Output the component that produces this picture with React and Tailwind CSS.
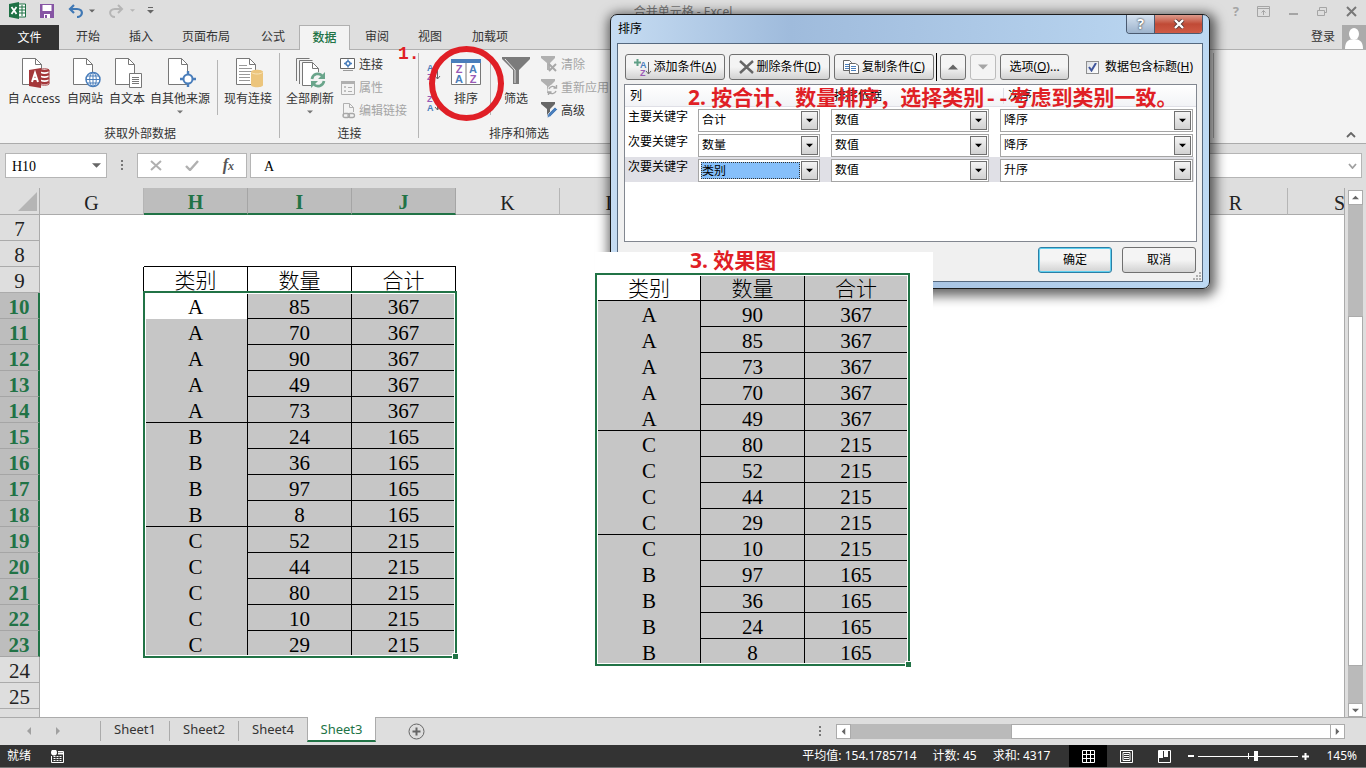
const cols = ['G', 'H', 'I', 'J', 'K', 'L', 'M', 'N', 'O', 'P', 'Q', 'R', 'S'];
const rowNumbers = [7, 8, 9, 10, 11, 12, 13, 14, 15, 16, 17, 18, 19, 20, 21, 22, 23, 24, 25, 26];
const selectedCols = ['H', 'I', 'J'];

const source = [
  ['A', 85, 367], ['A', 70, 367], ['A', 90, 367], ['A', 49, 367], ['A', 73, 367],
  ['B', 24, 165], ['B', 36, 165], ['B', 97, 165], ['B', 8, 165],
  ['C', 52, 215], ['C', 44, 215], ['C', 80, 215], ['C', 10, 215], ['C', 29, 215],
];

const sorted = [
  ['A', 90, 367], ['A', 85, 367], ['A', 73, 367], ['A', 70, 367], ['A', 49, 367],
  ['C', 80, 215], ['C', 52, 215], ['C', 44, 215], ['C', 29, 215], ['C', 10, 215],
  ['B', 97, 165], ['B', 36, 165], ['B', 24, 165], ['B', 8, 165],
];

const headings = ['类别', '数量', '合计'];

const sortLevels = [
  { label: '主要关键字', column: '合计', on: '数值', order: '降序' },
  { label: '次要关键字', column: '数量', on: '数值', order: '降序' },
  { label: '次要关键字', column: '类别', on: '数值', order: '升序', active: true },
];

/* ---------- icons ---------- */

function Page({ lines }) {
  return (
    <>
      <path d="M1.5 1.5h13l6 6v20h-19z" fill="#fff" stroke="#777" />
      <path d="M14.5 1.5v6h6" fill="none" stroke="#777" />
      {lines && <path d="M4 8.5h8M4 11.5h13M4 14.5h13M4 17.5h11M4 20.5h11M4 23.5h11" stroke="#999" />}
    </>
  );
}

function AccessIcon() {
  return (
    <svg width="34" height="32" viewBox="-4 0 34 32">
      <Page />
      <path d="M19 13c0-1.500 9-1.500 9 0v14c0 1.500-9 1.500-9 0z" fill="#fff" stroke="#a4373a" />
      <path d="M19 17c3 1.500 6 1.500 9 0M19 21c3 1.500 6 1.500 9 0M19 25c3 1.500 6 1.500 9 0M19 13c3 1.500 6 1.500 9 0" fill="none" stroke="#a4373a" strokeWidth="2" />
      <path d="M8 13l12-2v20L8 29z" fill="#a4373a" />
      <path d="M11 25l3-9 3 9M12 22h4" fill="none" stroke="#fff" strokeWidth="2" />
    </svg>
  );
}

function WebIcon() {
  return (
    <svg width="34" height="32" viewBox="-4 0 34 32">
      <Page />
      <circle cx="21" cy="22.500" r="7" fill="#fff" stroke="#4a7ebb" strokeWidth="1.500" />
      <ellipse cx="21" cy="22.500" rx="3.300" ry="7" fill="none" stroke="#4a7ebb" />
      <path d="M14 22.500h14M21 15.500v14M15 19h12M15 26h12" stroke="#4a7ebb" />
    </svg>
  );
}

function TextIcon() {
  return (
    <svg width="34" height="32" viewBox="-4 0 34 32">
      <Page />
      <path d="M15.500 16.500h12v14h-12z" fill="#fff" stroke="#777" />
      <path d="M18 20.500h7M18 22.500h7M18 24.500h7M18 26.500h7" stroke="#777" />
    </svg>
  );
}

function OtherIcon() {
  return (
    <svg width="34" height="32" viewBox="-4 0 34 32">
      <Page />
      <circle cx="21" cy="22" r="4.500" fill="#fff" stroke="#4a7ebb" strokeWidth="2" />
      <path d="M21 14v4M21 26v4M13 22h4M25 22h4" stroke="#4a7ebb" strokeWidth="2.400" />
    </svg>
  );
}

function ExistingIcon() {
  return (
    <svg width="34" height="32" viewBox="-4 0 34 32">
      <Page lines />
      <path d="M16 15c0-3 12-3 12 0v13c0 3-12 3-12 0z" fill="#ecc57c" />
      <path d="M16.500 15.500c2 2 9 2 11 0" fill="none" stroke="#f8e4ba" />
    </svg>
  );
}

function RefreshAllIcon() {
  return (
    <svg width="32" height="32" viewBox="0 0 32 32">
      <path d="M2.500 24V1.500h13M5.500 27V3.500h13" fill="none" stroke="#777" />
      <path d="M8.500 5.500h10l6 6v17h-16z" fill="#fff" stroke="#777" />
      <path d="M18.500 5.500v6h6" fill="none" stroke="#777" />
      <circle cx="24" cy="23" r="8" fill="#f3f3f3" />
      <path d="M18 22a6 6 0 0 1 10.500-3M30 24a6 6 0 0 1-10.500 3" fill="none" stroke="#6aa58b" strokeWidth="2.600" />
      <path d="M31 15v7h-7zM17 31v-7h7z" fill="#6aa58b" />
    </svg>
  );
}

function SortIcon() {
  return (
    <svg width="30" height="26" viewBox="0 0 30 26">
      <path d="M.5.5h29v25H.5z" fill="#fff" stroke="#777" />
      <path d="M0 0h30v4H0z" fill="#4a7ebb" />
      <path d="M15 4v21" stroke="#777" />
      <g fontFamily="Liberation Sans" fontSize="11" fontWeight="bold" textAnchor="middle">
        <text x="8" y="14" fill="#9a5bb5">Z</text>
        <text x="8" y="24" fill="#4a7ebb">A</text>
        <text x="22" y="14" fill="#4a7ebb">A</text>
        <text x="22" y="24" fill="#9a5bb5">Z</text>
      </g>
    </svg>
  );
}

function AzIcon({ top, bottom }) {
  return (
    <svg width="16" height="17" viewBox="0 0 16 17">
      <g fontFamily="Liberation Sans" fontSize="9" fontWeight="bold">
        <text x="1" y="7" fill={top === 'A' ? '#4a7ebb' : '#9a5bb5'}>{top}</text>
        <text x="1" y="16" fill={bottom === 'A' ? '#4a7ebb' : '#9a5bb5'}>{bottom}</text>
      </g>
      <path d="M11.500 3v12M9 12l2.500 3 2.500-3" fill="none" stroke="#666" />
    </svg>
  );
}

function FunnelIcon() {
  return (
    <svg width="28" height="28" viewBox="0 0 28 28">
      <path d="M0 0h28v2L17 13v14h-6V13L0 2z" fill="#7b7b7b" />
      <path d="M3 2l10 11v13" fill="none" stroke="#e5e5e5" />
    </svg>
  );
}

function SmallFunnel({ kind }) {
  const tone = kind === 'advanced' ? '#666' : '#b0b0b0';
  return (
    <svg width="17" height="17" viewBox="0 0 17 17">
      <path d="M0 0h14v2L9 7v7H6V7L0 2z" fill={tone} />
      {kind === 'clear' && <path d="M8 8l7 7M15 8l-7 7" stroke="#a8a8a8" strokeWidth="2" />}
      {kind === 'again' && (
        <>
          <circle cx="11.500" cy="11" r="5" fill="#f3f3f3" />
          <path d="M8 10a4 4 0 0 1 7-1M15 12a4 4 0 0 1-7 1M15.500 6v3h-3M7.500 16v-3h3" fill="none" stroke="#a8a8a8" strokeWidth="1.400" />
        </>
      )}
      {kind === 'advanced' && <path d="M6 16l1-4 7-7 2.500 2.500-7 7z" fill="#4a7ebb" stroke="#f3f3f3" strokeWidth=".7" />}
    </svg>
  );
}

function LinkIcon({ kind }) {
  return (
    <svg width="16" height="16" viewBox="0 0 16 16" fill="none">
      {kind === 'connect' && (
        <>
          <path d="M.5 1.500h14v10h-14z" fill="#fff" stroke="#666" />
          <path d="M3 13.500h10" stroke="#999" />
          <circle cx="8" cy="6.500" r="2" stroke="#4a7ebb" strokeWidth="1.500" />
          <path d="M8 2.500v2M8 8.500v2M4 6.500h2M10 6.500h2" stroke="#4a7ebb" strokeWidth="1.500" />
        </>
      )}
      {kind === 'props' && (
        <>
          <path d="M1.500 1.500h13v13h-13z" stroke="#b0b0b0" />
          <path d="M1 1h14v3H1z" fill="#b0b0b0" />
          <path d="M4.500 6.500h1v1h-1zM4.500 10.500h1v1h-1z" stroke="#b0b0b0" />
          <path d="M8 7.500h4M8 11.500h4" stroke="#b0b0b0" />
        </>
      )}
      {kind === 'edit' && (
        <>
          <path d="M3.500 13V.5h6l4 4V9" stroke="#b0b0b0" />
          <path d="M9.500.5v4h4" stroke="#b0b0b0" />
          <rect x="3" y="10.500" width="6.500" height="4" rx="2" stroke="#a8a8a8" strokeWidth="1.300" />
          <rect x="8" y="10.500" width="6.500" height="4" rx="2" stroke="#a8a8a8" strokeWidth="1.300" />
        </>
      )}
    </svg>
  );
}

function Triangle({ dir = 'down', className = 'text-[#666]', size = 7 }) {
  const d = {
    down: 'M0 2h8l-4 4z',
    up: 'M0 6h8l-4-4z',
    left: 'M6 0v8L2 4z',
    right: 'M2 0v8l4-4z',
  }[dir];
  return (
    <svg width={size} height={size} viewBox="0 0 8 8" className={className}>
      <path d={d} fill="currentColor" />
    </svg>
  );
}

/* ---------- window top ---------- */

function TitleBar() {
  return (
    <div className="grid h-[25px] grid-cols-[1fr_auto_1fr] items-start text-xs">
      <div className="flex items-center pt-[2px] pl-[9px]">
        <svg width="17" height="17" viewBox="0 0 17 17">
          <path d="M9 2h7.500v13H9z" fill="#fff" stroke="#1e7145" />
          <path d="M10 5h6M10 8h6M10 11h6M13 3v11" stroke="#1e7145" />
          <path d="M0 2l10-2v17L0 15z" fill="#1e7145" />
          <path d="M2.500 5l5 7M7.500 5l-5 7" stroke="#fff" strokeWidth="1.800" />
        </svg>
        <button aria-label="保存" className="ml-[14px]">
          <svg width="14" height="14" viewBox="0 0 14 14">
            <path d="M0 0h14v14H0z" fill="#8655a4" />
            <path d="M2.500 1h9v6h-9zM4 10h6v4H4z" fill="#fff" />
            <path d="M5 11h2v3H5z" fill="#8655a4" />
          </svg>
        </button>
        <button aria-label="撤消" className="ml-[14px] flex items-center gap-[5px]">
          <svg width="16" height="14" viewBox="0 0 16 14" fill="none" stroke="#3f78b5" strokeWidth="2.200">
            <path d="M6 1L2 5l4 4M2 5h7c7 0 6 8 0 8" />
          </svg>
          <Triangle size={6} />
        </button>
        <button aria-label="恢复" className="ml-[13px] flex items-center gap-[6px]">
          <svg width="16" height="14" viewBox="0 0 16 14" fill="none" stroke="#b5b5b5" strokeWidth="2">
            <path d="M10 1l4 4-4 4M14 5H7c-7 0-6 8 0 8" />
          </svg>
          <Triangle size={5} className="text-[#b5b5b5]" />
        </button>
        <button aria-label="自定义快速访问工具栏" className="ml-[12px]">
          <svg width="7" height="7" viewBox="0 0 7 7">
            <path d="M1 .5h5" stroke="#666" />
            <path d="M0 3h7L3.500 6.500z" fill="#666" />
          </svg>
        </button>
      </div>
      <div className="pt-[4px] text-[#777]">合并单元格 - Excel</div>
      <div className="flex items-center justify-end gap-[18px] pt-[4px] pr-[9px] text-[#a5a5a5]">
        <button aria-label="帮助" className="text-[13px] leading-[14px] font-bold">?</button>
        <button aria-label="功能区显示选项">
          <svg width="13" height="11" viewBox="0 0 13 11" fill="none" stroke="currentColor">
            <path d="M.5.5h12v10H.5zM.5 2.500h12M6.500 9V4.500M4.500 6.500l2-2 2 2" />
          </svg>
        </button>
        <button aria-label="最小化">
          <svg width="11" height="11" viewBox="0 0 11 11"><path d="M1 8h9" stroke="currentColor" strokeWidth="2" /></svg>
        </button>
        <button aria-label="还原">
          <svg width="11" height="11" viewBox="0 0 11 11" fill="none" stroke="currentColor">
            <path d="M.5 4.500h7v5h-7zM2.500 4V1.500h7v5H8" />
          </svg>
        </button>
        <button aria-label="关闭">
          <svg width="11" height="11" viewBox="0 0 11 11" stroke="#777" strokeWidth="2"><path d="M1 1l9 9M10 1l-9 9" /></svg>
        </button>
      </div>
    </div>
  );
}

function RibbonTabs() {
  const before = [
    ['开始', 'w-[58px]'], ['插入', 'w-[48px]'], ['页面布局', 'w-[82px]'], ['公式', 'w-[52px]'],
  ];
  const after = [['审阅', 'w-[54px]'], ['视图', 'w-[52px]'], ['加载项', 'w-[68px]']];
  return (
    <div className="flex h-[25px] text-xs text-[#333]">
      <button className="w-[59px] bg-[#333] text-white">文件</button>
      <div className="flex flex-1 border-b border-[#b0b0b0]">
        {before.map(([t, w]) => <button key={t} className={w}>{t}</button>)}
        <button className="-mb-px w-[51px] border border-b-0 border-[#b0b0b0] bg-[#f3f3f3] font-medium text-[#217346]">数据</button>
        {after.map(([t, w]) => <button key={t} className={w}>{t}</button>)}
        <div className="ml-auto flex items-center gap-[7px]">
          <button>登录</button>
          <svg width="24" height="24" viewBox="0 0 24 24">
            <path d="M0 0h24v24H0z" fill="#ababab" />
            <ellipse cx="12" cy="9" rx="5" ry="6" fill="#fff" />
            <path d="M3 24c0-7 3-9 6-9.500h6c3 .5 6 2.500 6 9.500z" fill="#fff" />
          </svg>
        </div>
      </div>
    </div>
  );
}

function BigButton({ icon, label, width, arrow }) {
  return (
    <button className={`${width} flex shrink-0 flex-col items-center whitespace-nowrap`}>
      <span className="h-[33px]">{icon}</span>
      <span className="leading-[18px]">{label}</span>
      {arrow && <Triangle size={6} className="mt-px text-[#777]" />}
    </button>
  );
}

function SmallButton({ icon, label, disabled }) {
  return (
    <button disabled={disabled} className="flex h-[23px] items-center gap-[3px] whitespace-nowrap text-[#333] disabled:text-[#a5a5a5]">
      {icon}
      {label}
    </button>
  );
}

function Group({ label, width, children }) {
  return (
    <div className={`${width} relative flex shrink-0 flex-col`}>
      <div className="flex h-[74px] items-start pt-[7px]">{children}</div>
      <div className="text-center leading-[19px]">{label}</div>
      <div className="absolute top-[3px] right-0 h-[85px] w-px bg-[#b5b5b5]" />
    </div>
  );
}

function Ribbon() {
  return (
    <div className="relative flex h-[94px] overflow-hidden border-b border-[#ababab] bg-[#f3f3f3] text-xs text-[#333]">
      <Group label="获取外部数据" width="w-[280px]">
        <BigButton icon={<AccessIcon />} label="自 Access" width="ml-[4px] w-[60px]" />
        <BigButton icon={<WebIcon />} label="自网站" width="w-[42px]" />
        <BigButton icon={<TextIcon />} label="自文本" width="w-[42px]" />
        <BigButton icon={<OtherIcon />} label="自其他来源" width="w-[64px]" arrow />
        <div className="mt-[3px] ml-[5px] h-[55px] w-px bg-[#b5b5b5]" />
        <BigButton icon={<ExistingIcon />} label="现有连接" width="w-[60px]" />
      </Group>
      <Group label="连接" width="w-[139px]">
        <BigButton icon={<RefreshAllIcon />} label="全部刷新" width="w-[60px]" arrow />
        <div className="-mt-[4px]">
          <SmallButton icon={<LinkIcon kind="connect" />} label="连接" />
          <SmallButton icon={<LinkIcon kind="props" />} label="属性" disabled />
          <SmallButton icon={<LinkIcon kind="edit" />} label="编辑链接" disabled />
        </div>
      </Group>
      <Group label="排序和筛选" width="w-[200px]">
        <div className="ml-[7px] flex w-[16px] flex-col gap-[14px] pt-[7px]">
          <button aria-label="升序"><AzIcon top="A" bottom="Z" /></button>
          <button aria-label="降序"><AzIcon top="Z" bottom="A" /></button>
        </div>
        <BigButton icon={<span className="block pt-[2px]"><SortIcon /></span>} label="排序" width="w-[48px]" />
        <div className="mt-[3px] h-[55px] w-px bg-[#b5b5b5]" />
        <BigButton icon={<FunnelIcon />} label="筛选" width="w-[50px]" />
        <div className="-mt-[4px]">
          <SmallButton icon={<SmallFunnel kind="clear" />} label="清除" disabled />
          <SmallButton icon={<SmallFunnel kind="again" />} label="重新应用" disabled />
          <SmallButton icon={<SmallFunnel kind="advanced" />} label="高级" />
        </div>
      </Group>
      <Group label="" width="w-[595px]" />
      <button aria-label="折叠功能区" className="mt-auto mr-[10px] mb-[5px] ml-auto">
        <svg width="10" height="6" viewBox="0 0 10 6" fill="none" stroke="#666" strokeWidth="1.800"><path d="M1 5l4-4 4 4" /></svg>
      </button>
    </div>
  );
}

function FormulaBar() {
  return (
    <div className="flex h-[44px] items-start pt-[9px] pr-[4px] pl-[5px] font-['Liberation_Serif',serif] text-sm">
      <div className="flex h-[25px] w-[102px] items-center border border-[#b5b5b5] bg-white pr-[5px]">
        <input aria-label="名称框" defaultValue="H10" className="min-w-0 flex-1 pt-[2px] pl-[6px] outline-none" />
        <Triangle size={9} />
      </div>
      <svg width="3" height="11" viewBox="0 0 3 11" className="mt-[7px] ml-[14px]" fill="#777">
        <path d="M0 0h2v2H0zM0 4h2v2H0zM0 8h2v2H0z" />
      </svg>
      <div className="ml-[13px] flex h-[25px] w-[110px] items-center justify-between border border-[#b5b5b5] bg-white px-[12px]">
        <button aria-label="取消输入">
          <svg width="12" height="11" viewBox="0 0 12 11" stroke="#b0b0b0" strokeWidth="2"><path d="M1 1l10 9M11 1L1 10" /></svg>
        </button>
        <button aria-label="输入">
          <svg width="14" height="11" viewBox="0 0 14 11" fill="none" stroke="#b0b0b0" strokeWidth="2.400"><path d="M1 6l4 4 8-9" /></svg>
        </button>
        <button aria-label="插入函数" className="text-base leading-none font-bold text-[#555] italic">
          f<span className="text-xs">x</span>
        </button>
      </div>
      <div className="ml-[3px] flex h-[25px] flex-1 items-center border border-[#b5b5b5] bg-white pr-[4px]">
        <input aria-label="编辑栏" defaultValue="A" className="min-w-0 flex-1 pt-[2px] pl-[13px] outline-none" />
        <svg width="9" height="6" viewBox="0 0 9 6" fill="none" stroke="#a0a0a0" strokeWidth="1.800"><path d="M1 1l3.500 4L8 1" /></svg>
      </div>
    </div>
  );
}

/* ---------- worksheet ---------- */

function cellValue(row, col) {
  const i = selectedCols.indexOf(col);
  if (i < 0) return '';
  if (row === 9) return headings[i];
  return source[row - 10]?.[i] ?? '';
}

function cellStyle(row, col) {
  const i = selectedCols.indexOf(col);
  if (col === 'G' && row === 9) return 'border-r border-black';
  if (i < 0) return '';
  if (row === 8) return 'border-b border-black';
  if (row === 9) return 'border-r border-b border-black';
  if (row < 10 || row > 23) return '';
  if (i > 0) return 'border-r border-b border-black bg-[#c6c6c6]';
  if (row === 10) return 'border-r border-r-black bg-white';
  if (row === 14 || row === 18) return 'border-r border-b border-black bg-[#c6c6c6]';
  return 'border-r border-black bg-[#c6c6c6]';
}

function Worksheet() {
  return (
    <div className="flex min-h-0 flex-1">
      <div className="relative min-w-0 flex-1 overflow-hidden border-r border-[#ababab]">
        <table className="w-[1392px] table-fixed border-separate border-spacing-0 bg-white text-center font-['Liberation_Serif','Noto_Sans_CJK_SC',serif] text-[21px] leading-[22px] font-light">
          <colgroup>
            <col className="w-[40px]" />
            {cols.map((c) => <col key={c} className="w-[104px]" />)}
          </colgroup>
          <thead>
            <tr className="h-[27px] text-[#222]">
              <th className="border-r border-b border-[#ababab] bg-[#dedede] p-0">
                <svg width="19" height="19" viewBox="0 0 19 19" className="mr-[2px] ml-auto"><path d="M19 0v19H0z" fill="#b5b5b5" /></svg>
              </th>
              {cols.map((c) => (
                <th
                  key={c}
                  className={
                    selectedCols.includes(c)
                      ? 'border-r border-b-2 border-r-[#a5a5a5] border-b-[#217346] bg-[#bdbdbd] p-0 pt-[3px] text-xl leading-[22px] font-bold text-[#217346]'
                      : 'border-r border-b border-r-[#b5b5b5] border-b-[#ababab] bg-[#dedede] p-0 pt-[3px] text-xl leading-[22px] font-normal'
                  }
                >
                  {c}
                </th>
              ))}
            </tr>
          </thead>
          <tbody>
            {rowNumbers.map((r) => (
              <tr key={r} className="h-[26px]">
                <th
                  className={
                    r >= 10 && r <= 23
                      ? 'border-r-2 border-b border-r-[#217346] border-b-[#a5a5a5] bg-[#bdbdbd] p-0 pt-[4px] leading-[21px] font-bold text-[#217346]'
                      : 'border-r border-b border-[#ababab] bg-[#dedede] p-0 pt-[4px] leading-[21px] font-normal text-[#222]'
                  }
                >
                  {r < 26 && r}
                </th>
                {cols.map((c) => (
                  <td key={c} className={`p-0 pt-[3px] align-top ${cellStyle(r, c)}`}>{cellValue(r, c)}</td>
                ))}
              </tr>
            ))}
          </tbody>
        </table>
        {/* selection frame around H10:J23 */}
        <div className="pointer-events-none absolute top-[103px] left-[143px] h-[367px] w-[314px] border-2 border-[#217346]">
          <div className="h-full border border-white" />
          <div className="absolute -right-[4px] -bottom-[4px] size-[7px] border border-white bg-[#217346]" />
        </div>
      </div>
      <div className="flex w-[21px] flex-col pt-[2px] pr-[3px] pl-[3px]">
        <button aria-label="向上滚动" className="flex h-[15px] items-center justify-center border border-[#ababab] bg-white"><Triangle dir="up" /></button>
        <div className="h-[111px] bg-[#bababa]" />
        <div className="h-[350px] border border-[#ababab] bg-white" />
        <div className="flex-1 bg-[#bababa]" />
        <button aria-label="向下滚动" className="flex h-[14px] items-center justify-center border border-[#ababab] bg-white"><Triangle /></button>
      </div>
    </div>
  );
}

function SheetTabs() {
  return (
    <div className="flex h-[28px] items-start border-t border-[#ababab] text-[13px] text-[#333]">
      <div className="flex w-[100px] gap-[21px] pt-[9px] pl-[25px]">
        <button aria-label="上一张"><Triangle dir="left" size={8} className="text-[#a0a0a0]" /></button>
        <button aria-label="下一张"><Triangle dir="right" size={8} className="text-[#a0a0a0]" /></button>
      </div>
      {['Sheet1', 'Sheet2', 'Sheet4'].map((s) => (
        <button key={s} className="mt-[3px] h-[20px] w-[69px] border-l border-[#ababab] pb-[3px] leading-[17px]">{s}</button>
      ))}
      <button className="-mt-px h-[25px] w-[69px] border-r border-b-2 border-l border-r-[#ababab] border-b-[#217346] border-l-[#ababab] bg-white pt-[2px] leading-[21px] text-[#217346]">Sheet3</button>
      <button aria-label="新工作表" className="mt-[5px] ml-[32px]">
        <svg width="17" height="17" viewBox="0 0 17 17" fill="none" stroke="#666">
          <circle cx="8.500" cy="8.500" r="7.500" />
          <path d="M8.500 4.500v8M4.500 8.500h8" strokeWidth="2" />
        </svg>
      </button>
      <svg width="3" height="11" viewBox="0 0 3 11" className="mt-[8px] ml-auto" fill="#777">
        <path d="M0 0h2v2H0zM0 4h2v2H0zM0 8h2v2H0z" />
      </svg>
      <div className="mt-[6px] mr-[21px] ml-[14px] flex h-[15px] w-[509px]">
        <button aria-label="向左滚动" className="flex w-[15px] items-center justify-center border border-[#ababab] bg-white"><Triangle dir="left" /></button>
        <div className="w-[160px] bg-[#bababa]" />
        <div className="flex-1 border border-r-0 border-[#ababab] bg-white" />
        <button aria-label="向右滚动" className="flex w-[15px] items-center justify-center border border-[#ababab] bg-white"><Triangle dir="right" /></button>
      </div>
    </div>
  );
}

function StatusBar() {
  return (
    <div className="flex h-[23px] items-center border-b border-[#777] bg-[#333] pl-[7px] text-xs text-white">
      <span>就绪</span>
      <svg width="13" height="13" viewBox="0 0 13 13" className="ml-[20px]" fill="none" stroke="#fff">
        <path d="M.5 6v6.500h12v-11H7" />
        <path d="M7 3.500h5" strokeWidth="2" />
        <path d="M2.500 6.500h8M2.500 8.500h8M2.500 10.500h8" strokeDasharray="2 1" />
        <circle cx="3" cy="2.500" r="3" fill="#fff" stroke="none" />
      </svg>
      <span className="ml-auto">平均值: 154.1785714</span>
      <span className="ml-[16px]">计数: 45</span>
      <span className="ml-[16px]">求和: 4317</span>
      <button aria-label="普通" className="ml-[19px] flex h-full w-[38px] items-center justify-center bg-black">
        <svg width="13" height="13" viewBox="0 0 13 13" fill="none" stroke="#fff"><path d="M.5.5h12v12H.5zM4.500 0v13M8.500 0v13M0 4.500h13M0 8.500h13" /></svg>
      </button>
      <button aria-label="页面布局视图" className="flex w-[38px] justify-center">
        <svg width="13" height="13" viewBox="0 0 13 13" fill="none" stroke="#fff"><path d="M.5.5h12v12H.5zM3 2.500h7v8H3zM4 4.500h5M4 6.500h5M4 8.500h5" /></svg>
      </button>
      <button aria-label="分页预览" className="flex w-[38px] justify-center">
        <svg width="13" height="13" viewBox="0 0 13 13" fill="none" stroke="#fff">
          <path d="M.5.5h12v12H.5z" />
          <path d="M1 1h4v7H1zM6 1h4v6H6z" fill="#fff" stroke="none" />
        </svg>
      </button>
      <button aria-label="缩小" className="ml-[4px]">
        <svg width="8" height="8" viewBox="0 0 8 8"><path d="M1 4h6" stroke="#fff" strokeWidth="2" /></svg>
      </button>
      <svg width="100" height="12" viewBox="0 0 100 12" className="mx-[3px]">
        <path d="M0 6.500h100M50.500 3v6" stroke="#fff" />
        <path d="M56 1h4v10h-4z" fill="#fff" />
      </svg>
      <button aria-label="放大">
        <svg width="9" height="9" viewBox="0 0 9 9"><path d="M1 4.500h7M4.500 1v7" stroke="#fff" strokeWidth="2" /></svg>
      </button>
      <button className="mr-[9px] ml-[16px]">145%</button>
    </div>
  );
}

/* ---------- sort dialog ---------- */

const dialogButton =
  'flex h-[26px] items-center justify-center rounded-[3px] border border-[#707070] bg-linear-to-b from-[#f4f4f4] from-50% to-[#d2d2d2] whitespace-nowrap';

function Combo({ value, label, width, focused }) {
  return (
    <div className={`${width} flex h-[23px] border border-[#a5a5a5] bg-white p-px`}>
      <select
        aria-label={label}
        className={
          focused
            ? 'm-px min-w-0 flex-1 appearance-none border border-dotted border-[#333] bg-[#86bffa] leading-none outline-none'
            : 'min-w-0 flex-1 appearance-none pb-px pl-[2px] leading-none outline-none'
        }
      >
        <option>{value}</option>
      </select>
      <span className="pointer-events-none flex w-[17px] items-center justify-center border border-[#707070] bg-linear-to-b from-[#f4f4f4] to-[#d2d2d2]">
        <Triangle className="text-black" />
      </span>
    </div>
  );
}

function SortDialog() {
  return (
    <section
      role="dialog"
      aria-label="排序"
      className="absolute top-[14px] left-[610px] flex h-[275px] w-[600px] flex-col rounded-[7px] border border-[#1c1c1c] bg-linear-to-r from-[#c6dcf2] via-[#9fbbdc] via-30% to-[#bdd9f3] px-[6px] pb-[6px] text-xs text-black shadow-[2px_3px_12px_4px_rgba(0,0,0,0.6)]"
    >
      <div className="flex h-[28px] items-start">
        <h2 className="pl-px leading-[28px]">排序</h2>
        <div className="ml-auto flex h-[19px] overflow-hidden rounded-b-[4px] border border-t-0 border-[#4a5a70]">
          <button aria-label="帮助" className="w-[28px] border-r border-[#4a5a70] bg-linear-to-b from-[#d5e2f0] to-[#9db3cc] text-sm leading-none font-bold text-white [text-shadow:0_0_2px_#000]">?</button>
          <button aria-label="关闭" className="flex w-[47px] items-center justify-center bg-linear-to-b from-[#dc9a8c] via-[#c04a36] to-[#cf5a45]">
            <svg width="12" height="10" viewBox="0 0 12 10">
              <path d="M2 1l8 8M10 1L2 9" stroke="#5c3a38" strokeWidth="4" />
              <path d="M2 1l8 8M10 1L2 9" stroke="#fff" strokeWidth="2.400" />
            </svg>
          </button>
        </div>
      </div>
      <div className="flex flex-1 flex-col border border-[#56697f] bg-[#f0f0f0] px-[6px] pt-[9px]">
        <div className="flex items-center pl-px">
          <button className={`${dialogButton} w-[100px] gap-[2px]`}>
            <svg width="18" height="17" viewBox="0 0 18 17">
              <path d="M3.500 0v7M0 3.500h7" stroke="#5f9f86" strokeWidth="2" />
              <g fontFamily="Liberation Sans" fontSize="9" fontWeight="bold">
                <text x="6" y="9" fill="#4a7ebb">A</text>
                <text x="6" y="17" fill="#9a5bb5">Z</text>
              </g>
              <path d="M14.500 3v12M12 12l2.500 3 2.500-3" fill="none" stroke="#666" />
            </svg>
            <span>添加条件(<u>A</u>)</span>
          </button>
          <button className={`${dialogButton} ml-[4px] w-[101px] gap-[3px]`}>
            <svg width="15" height="14" viewBox="0 0 15 14" stroke="#666" strokeWidth="2.400"><path d="M1 1l13 12M14 1L1 13" /></svg>
            <span>删除条件(<u>D</u>)</span>
          </button>
          <button className={`${dialogButton} ml-[4px] w-[100px] gap-[3px]`}>
            <svg width="16" height="14" viewBox="0 0 16 14" fill="#fff" stroke="#666">
              <path d="M.5.5h6l2 2v8h-8z" />
              <path d="M2 4.500h4M2 6.500h4M2 8.500h4" stroke="#4a7ebb" />
              <path d="M6.500 3.500h6l3 2v8h-9z" />
              <path d="M8 6.500h5M8 8.500h5M8 10.500h5" stroke="#4a7ebb" />
            </svg>
            <span>复制条件(<u>C</u>)</span>
          </button>
          <div className="ml-[2px] h-[28px] w-px bg-black" />
          <button aria-label="上移" className={`${dialogButton} ml-[3px] w-[26px]`}><Triangle dir="up" size={10} /></button>
          <button aria-label="下移" disabled className="ml-[4px] flex h-[26px] w-[26px] items-center justify-center rounded-[3px] border border-[#bcbcbc] bg-[#f4f4f4]"><Triangle size={10} className="text-[#a5a5a5]" /></button>
          <button className={`${dialogButton} ml-[4px] w-[69px]`}><span>选项(<u>O</u>)...</span></button>
          <label className="ml-auto flex items-center gap-[6px] pr-[3px] whitespace-nowrap">
            <span className="relative flex size-[13px]">
              <input type="checkbox" defaultChecked className="size-[13px] appearance-none border border-[#8e8f8f] bg-linear-to-br from-[#dcdfe4] to-white" />
              <svg width="9" height="9" viewBox="0 0 9 9" className="pointer-events-none absolute top-[2px] left-[2px]" fill="none" stroke="#3f559c" strokeWidth="2"><path d="M1 4l2.500 3.500L8 0" /></svg>
            </span>
            <span>数据包含标题(<u>H</u>)</span>
          </label>
        </div>
        <div className="mt-[3px] h-[158px] w-[573px] border border-[#828790] bg-white">
          <div className="grid h-[22px] grid-cols-[204px_169px_1fr] items-center border-b border-[#dfdfe6] bg-linear-to-b from-white to-[#f2f3f6] pl-[5px]">
            <span>列</span>
            <span>排序依据</span>
            <span className="border-l border-[#dfdfe6] pl-[4px]">次序</span>
          </div>
          {sortLevels.map((l, i) => (
            <div key={i} className={`flex h-[25px] items-center pt-[2px] pl-[3px] ${l.active ? 'w-[569px] bg-[#e0e0e6]' : ''}`}>
              <span className="w-[70px] self-start leading-[16px]">{l.label}</span>
              <Combo label="列" value={l.column} width="w-[122px]" focused={l.active} />
              <Combo label="排序依据" value={l.on} width="ml-[11px] w-[158px]" />
              <Combo label="次序" value={l.order} width="ml-[11px] w-[193px]" />
            </div>
          ))}
        </div>
        <div className="mt-[5px] flex justify-end gap-[10px]">
          <button className="flex h-[26px] w-[74px] items-center justify-center rounded-[3px] border border-[#2c7fa5] bg-linear-to-b from-[#f4f4f4] from-50% to-[#d2d2d2] shadow-[inset_0_0_0_1px_#5fd0f0]">确定</button>
          <button className={`${dialogButton} w-[74px]`}>取消</button>
        </div>
      </div>
      <svg width="8" height="8" viewBox="0 0 8 8" className="absolute right-[8px] bottom-[8px]" fill="#b0b0b0">
        <path d="M6 0h2v2H6zM3 3h2v2H3zM6 3h2v2H6zM0 6h2v2H0zM3 6h2v2H3zM6 6h2v2H6z" />
      </svg>
    </section>
  );
}

/* ---------- pasted result and red notes ---------- */

function ResultPicture() {
  return (
    <div className="absolute top-[252px] left-[595px] w-[338px] bg-white font-['Liberation_Serif','Noto_Sans_CJK_SC',serif]">
      <div className="h-[21px] pl-[95px] font-['Noto_Sans','Noto_Sans_CJK_SC',sans-serif] text-[21px] leading-[16px] font-bold text-[#e01f26]">3. 效果图</div>
      <div className="relative w-[315px] border-2 border-[#217346] p-px">
        <table className="w-full table-fixed border-separate border-spacing-0 text-center text-[21px] leading-[20px] font-light">
          <colgroup>
            <col className="w-[103px]" />
            <col className="w-[104px]" />
            <col className="w-[102px]" />
          </colgroup>
          <thead>
            <tr className="h-[25px]">
              {headings.map((h, i) => (
                <th key={h} className={`border-b border-black p-0 pt-[2px] font-light ${i === 0 ? 'border-r bg-white' : i === 1 ? 'border-r bg-[#c6c6c6]' : 'bg-[#c6c6c6]'}`}>{h}</th>
              ))}
            </tr>
          </thead>
          <tbody>
            {sorted.map(([cat, n, sum], i) => {
              const last = i === sorted.length - 1;
              return (
                <tr key={i} className={last ? 'h-[24px]' : 'h-[26px]'}>
                  <td className={`border-r border-black bg-[#c6c6c6] p-0 pt-[4px] align-top ${i === 4 || i === 8 ? 'border-b' : ''}`}>{cat}</td>
                  <td className={`border-r border-black bg-[#c6c6c6] p-0 pt-[4px] align-top ${last ? '' : 'border-b'}`}>{n}</td>
                  <td className={`border-black bg-[#c6c6c6] p-0 pt-[4px] align-top ${last ? '' : 'border-b'}`}>{sum}</td>
                </tr>
              );
            })}
          </tbody>
        </table>
        <div className="absolute -right-[4px] -bottom-[4px] size-[7px] border border-white bg-[#217346]" />
      </div>
    </div>
  );
}

function Notes() {
  return (
    <div className="pointer-events-none font-bold text-[#e01f26]">
      <span className="absolute top-[44px] left-[398px] font-['Liberation_Mono',monospace] text-[18px] leading-[20px]">1.</span>
      <div className="absolute top-[46px] left-[429px] size-[75px] rounded-full border-[6px] border-[#e01f26]" />
      <p className="absolute top-[86px] left-[688px] text-[21px] leading-[22px] whitespace-nowrap">
        2. 按合计、数量排序，选择类别<span className="font-['Liberation_Mono',monospace]">--</span>考虑到类别一致。
      </p>
    </div>
  );
}

export default function App() {
  return (
    <div className="relative flex h-screen w-full flex-col overflow-hidden bg-[#dedede] font-['Noto_Sans','Noto_Sans_CJK_SC',sans-serif]">
      <TitleBar />
      <RibbonTabs />
      <Ribbon />
      <FormulaBar />
      <Worksheet />
      <SheetTabs />
      <StatusBar />
      <SortDialog />
      <ResultPicture />
      <Notes />
    </div>
  );
}
